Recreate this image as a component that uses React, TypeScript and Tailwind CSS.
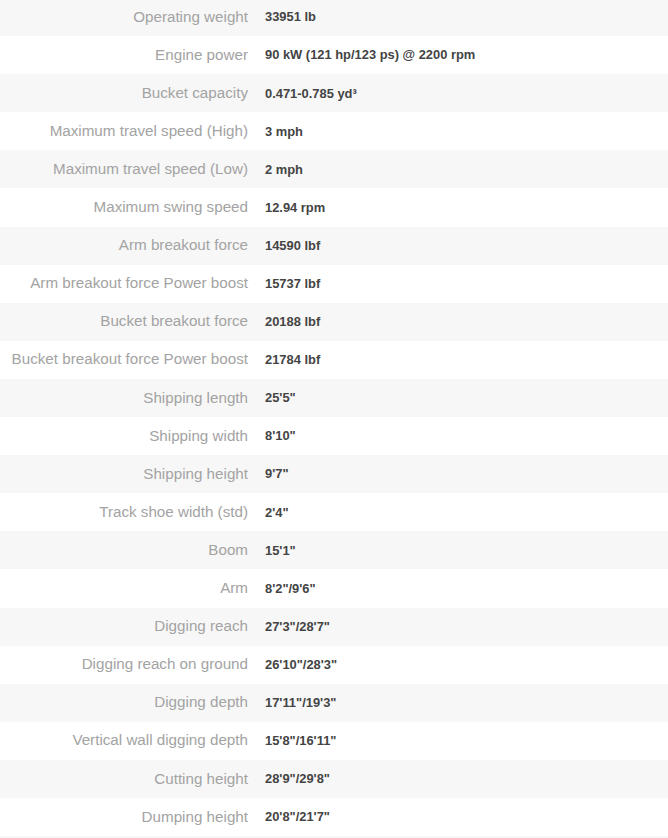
const specs: [string, string][] = [
  ["Operating weight", "33951 lb"],
  ["Engine power", "90 kW (121 hp/123 ps) @ 2200 rpm"],
  ["Bucket capacity", "0.471-0.785 yd³"],
  ["Maximum travel speed (High)", "3 mph"],
  ["Maximum travel speed (Low)", "2 mph"],
  ["Maximum swing speed", "12.94 rpm"],
  ["Arm breakout force", "14590 lbf"],
  ["Arm breakout force Power boost", "15737 lbf"],
  ["Bucket breakout force", "20188 lbf"],
  ["Bucket breakout force Power boost", "21784 lbf"],
  ["Shipping length", "25'5\""],
  ["Shipping width", "8'10\""],
  ["Shipping height", "9'7\""],
  ["Track shoe width (std)", "2'4\""],
  ["Boom", "15'1\""],
  ["Arm", "8'2\"/9'6\""],
  ["Digging reach", "27'3\"/28'7\""],
  ["Digging reach on ground", "26'10\"/28'3\""],
  ["Digging depth", "17'11\"/19'3\""],
  ["Vertical wall digging depth", "15'8\"/16'11\""],
  ["Cutting height", "28'9\"/29'8\""],
  ["Dumping height", "20'8\"/21'7\""],
];

export default function App() {
  return (
    <div className="w-[668px] h-[838px] overflow-hidden bg-white font-['Liberation_Sans',Arial,sans-serif]">
      <div className="-mt-[2px] flex flex-col">
        {specs.map(([label, value], i) => (
          <div
            key={label}
            className={`flex items-center h-[38.1px] ${i % 2 === 0 ? "bg-[#f7f7f7]" : "bg-white"}`}
          >
            <div className="w-[248px] shrink-0 text-right text-[15.2px] text-[#a3a3a3] whitespace-nowrap">
              {label}
            </div>
            <div className="pl-[17px] text-[12.9px] font-bold text-[#444444] whitespace-nowrap">
              {value}
            </div>
          </div>
        ))}
        <div className="h-[10px] bg-[#f7f7f7]" />
      </div>
    </div>
  );
}
